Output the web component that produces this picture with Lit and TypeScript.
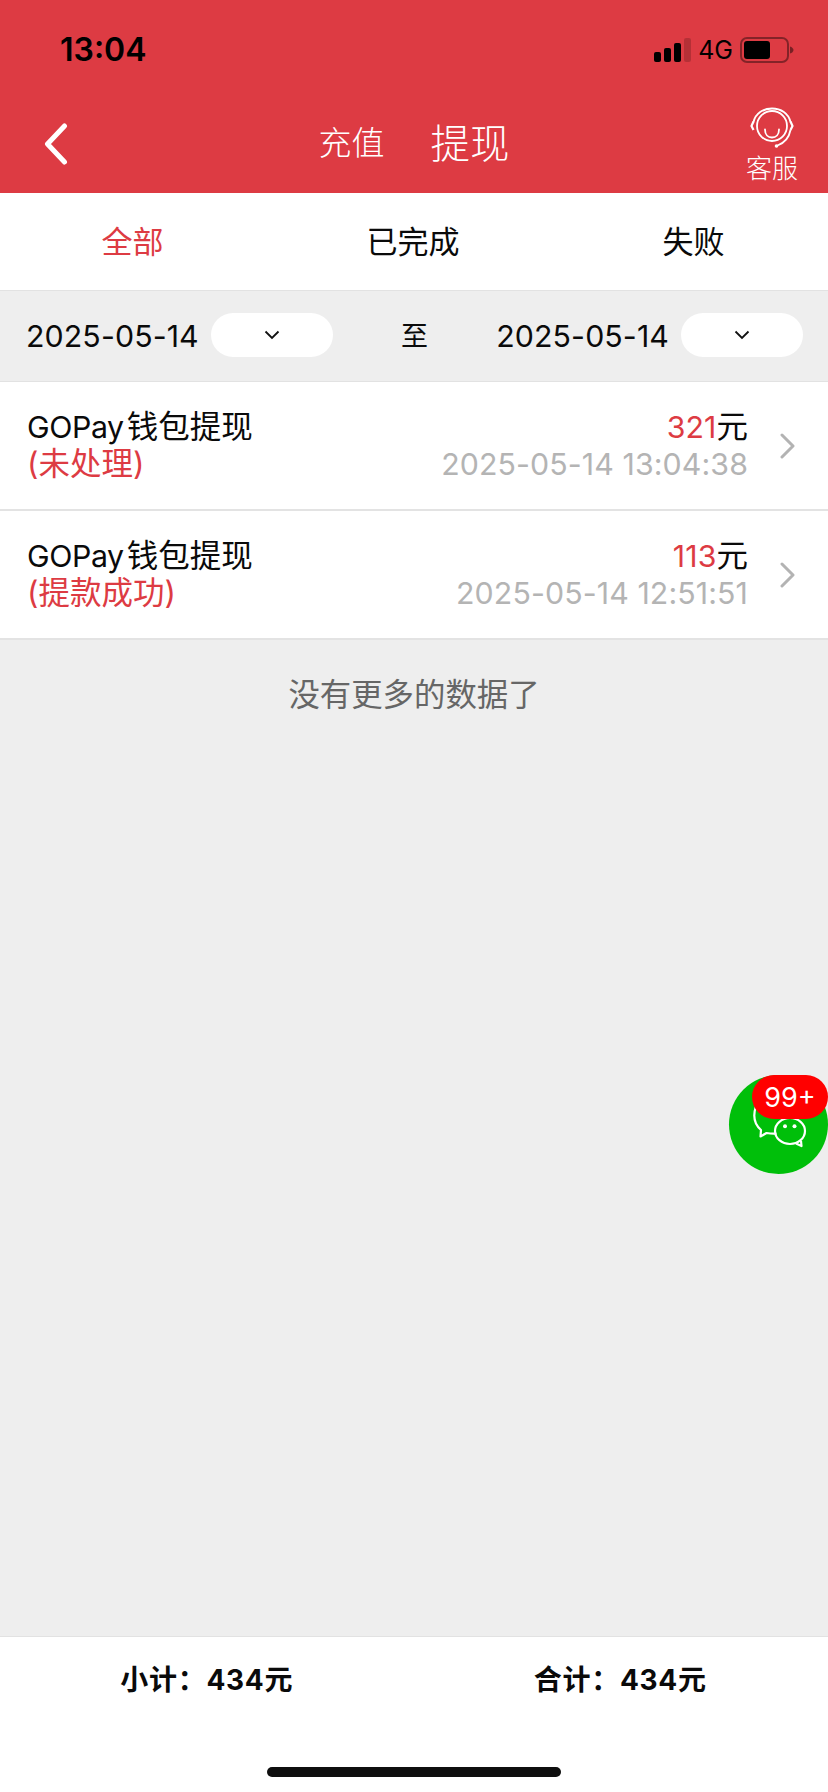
import { LitElement, html, css } from "lit";
import { customElement } from "lit/decorators.js";

const chevDown = html`<svg width="16" height="10" viewBox="0 0 16 10"><path d="M1.500 1.500 8 8l6.500-6.500" fill="none" stroke="#111" stroke-width="1.800"/></svg>`;
const chevRight = html`<svg class="arrow" width="16" height="26" viewBox="0 0 16 26"><path d="M3 2 14 13 3 24" fill="none" stroke="#b3b3b3" stroke-width="3" stroke-linecap="round" stroke-linejoin="round"/></svg>`;

@customElement("app-root")
export class AppRoot extends LitElement {
  static styles = css`
    :host { display: block; width: 828px; height: 1792px; position: relative; overflow: hidden; background: #eeeeee;
      font-family: "Inter", "Noto Sans CJK SC", sans-serif; color: #0a0a0a; font-size: 31px; }
    .page { display: flex; flex-direction: column; height: 1792px; }
    .n { font-size: 30.300px; letter-spacing: 0.100px; }
    .g { font-size: 30.300px; word-spacing: -5px; letter-spacing: -0.400px; }
    .head { background: #dd3b43; height: 193px; display: flex; flex-direction: column; flex: none; }
    .status { height: 88px; display: flex; align-items: center; justify-content: space-between; padding: 11px 34px 0 60px; box-sizing: border-box; color: #000; }
    .time { font-size: 32px; font-weight: 600; line-height: 40px; }
    .sys { display: flex; align-items: center; gap: 7px; }
    .net { font-size: 25px; line-height: 30px; }
    .nav { flex: 1; display: grid; grid-template-columns: 1fr auto 1fr; align-items: center; color: #fff; padding: 0 30px; }
    .back { margin: 6px 0 0 14px; }
    .titles { display: flex; align-items: center; gap: 46px; font-weight: 300; }
    .t1 { font-size: 33px; }
    .t2 { font-size: 39.500px; font-weight: 300; }
    .svc { justify-self: end; align-self: stretch; display: flex; flex-direction: column; align-items: center; font-size: 26px; font-weight: 300; line-height: 32px; padding-top: 19px; }
    .svc svg { display: block; margin-bottom: 5px; }
    .tabs { background: #fff; height: 97px; display: flex; justify-content: space-around; align-items: center; flex: none; box-sizing: border-box; padding: 0 2px 4px 0; }
    .tabs .on { color: #dd3b43; }
    .filter { height: 92px; flex: none; box-sizing: border-box; border-top: 1px solid #e2e2e2; border-bottom: 1px solid #e2e2e2; display: flex; align-items: center; justify-content: space-between; padding: 0 25px 0 26px; }
    .grp { display: flex; align-items: center; gap: 12px; }
    .pill { width: 122px; height: 44px; border-radius: 22px; background: #fff; display: flex; align-items: center; justify-content: center; margin-top: -2px; }
    .to { font-size: 27px; margin-top: -4px; }
    .row { height: 129px; flex: none; box-sizing: border-box; background: #fff; border-bottom: 2px solid #e3e3e3; display: flex; align-items: center; padding: 0 33px 0 27px; line-height: 38px; font-size: 31.500px; }
    .left { flex: 1; }
    .st { color: #dd3b43; margin-top: -1px; }
    .right { text-align: right; }
    .red { color: #dd3b43; }
    .ts { color: #b4b4b4; margin-top: -1px; }
    .arrow { margin-left: 31px; flex: none; }
    .more { text-align: center; color: #666; font-size: 31.400px; line-height: 40px; padding-top: 35px; flex: 1; }
    .foot { height: 156px; flex: none; box-sizing: border-box; background: #fff; border-top: 1px solid #e2e2e2; display: flex; flex-direction: column; align-items: center; }
    .sum { width: 100%; display: flex; justify-content: space-around; font-size: 28px; font-weight: 700; letter-spacing: 0.700px; line-height: 36px; padding-top: 25px; box-sizing: border-box; padding-right: 1px; }
    .bar { width: 294px; height: 10px; border-radius: 5px; background: #0e0e0e; margin-top: 69px; }
    .fab { position: absolute; left: 729px; top: 1075px; width: 99px; height: 99px; border-radius: 50%; background: #00bf0a; }
    .fab svg { position: absolute; left: 24px; top: 28px; }
    .badge { position: absolute; left: 23px; top: 0; width: 76px; height: 44px; border-radius: 22px; background: #f00; color: #fff; font-size: 27px; display: flex; align-items: center; justify-content: center; }
  `;

  render() {
    return html`<div class="page">
      <div class="head">
        <div class="status">
          <span class="time">13:04</span>
          <div class="sys">
            <svg width="37" height="24" viewBox="0 0 37 24"><rect x="0" y="14" width="7" height="10" rx="2" fill="#000"/><rect x="10" y="10" width="7" height="14" rx="2" fill="#000"/><rect x="20" y="5" width="7" height="19" rx="2" fill="#000"/><rect x="30" y="0" width="7" height="24" rx="2" fill="#000" fill-opacity=".18"/></svg>
            <span class="net">4G</span>
            <svg width="54" height="26" viewBox="0 0 54 26"><rect x="1" y="1" width="47" height="24" rx="6" fill="none" stroke="#000" stroke-opacity=".4" stroke-width="2"/><rect x="4" y="4" width="26" height="18" rx="3" fill="#000"/><path d="M50 9.500c2 .5 3.500 2 3.500 3.500s-1.500 3-3.500 3.500z" fill="#000" fill-opacity=".45"/></svg>
          </div>
        </div>
        <div class="nav">
          <svg class="back" width="24" height="42" viewBox="0 0 24 42"><path d="M20.500 3 3.500 21l17 18" fill="none" stroke="#fff" stroke-width="5" stroke-linecap="round" stroke-linejoin="round"/></svg>
          <div class="titles"><span class="t1">充值</span><span class="t2">提现</span></div>
          <div class="svc">
            <svg width="48" height="41" viewBox="0 0 48 41" fill="none" stroke="#fff" stroke-width="1.800">
              <circle cx="24" cy="19" r="15"/>
              <path d="M5.500 15C7.500 6.500 15 1.500 24 1.500S40.500 6.500 42.500 15"/>
              <path d="M5.500 14.500 3.500 19l2 4M42.500 14.500 44.500 19l-2 4" stroke-width="2.200" stroke-linejoin="round"/>
              <path d="M42.500 23C41 31 36 36 29.500 38.500"/>
              <circle cx="28.500" cy="39" r="1.800" fill="#fff" stroke="none"/>
              <path d="M17 22.500c0 5 3 8 7 8s7-3 7-8" stroke-linecap="round"/>
            </svg>
            <span>客服</span>
          </div>
        </div>
      </div>
      <div class="tabs"><span class="on">全部</span><span>已完成</span><span>失败</span></div>
      <div class="filter">
        <div class="grp"><span class="n">2025-05-14</span><span class="pill">${chevDown}</span></div>
        <span class="to">至</span>
        <div class="grp"><span class="n">2025-05-14</span><span class="pill">${chevDown}</span></div>
      </div>
      <div class="row">
        <div class="left"><div><span class="g">GOPay </span>钱包提现</div><div class="st">(未处理)</div></div>
        <div class="right"><div><span class="red n">321</span>元</div><div class="ts n">2025-05-14 13:04:38</div></div>
        ${chevRight}
      </div>
      <div class="row">
        <div class="left"><div><span class="g">GOPay </span>钱包提现</div><div class="st">(提款成功)</div></div>
        <div class="right"><div><span class="red n">113</span>元</div><div class="ts n">2025-05-14 12:51:51</div></div>
        ${chevRight}
      </div>
      <div class="more">没有更多的数据了</div>
      <div class="foot">
        <div class="sum"><span>小计：434元</span><span>合计：434元</span></div>
        <div class="bar"></div>
      </div>
    </div>
    <div class="fab">
      <svg width="54" height="48" viewBox="0 0 54 48" fill="none" stroke="#fff" stroke-width="2.200" stroke-linejoin="round">
        <path d="M3 3C0 12 1 21 8 27l-.5 6.500 6-3.500c3 .5 6 1 10 .5"/>
        <ellipse cx="37" cy="28" rx="15" ry="13"/>
        <path d="M43 40.500l5.500 2.500-.5-5"/>
        <circle cx="32" cy="23.300" r="2" fill="#fff" stroke="none"/><circle cx="41.500" cy="23.300" r="2" fill="#fff" stroke="none"/>
      </svg>
      <div class="badge">99+</div>
    </div>`;
  }
}
